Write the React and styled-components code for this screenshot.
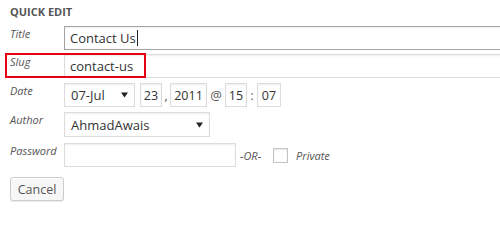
import React from 'react';
import styled, { createGlobalStyle } from 'styled-components';

const GlobalStyle = createGlobalStyle`
  html, body {
    margin: 0;
    padding: 0;
    background: #fff;
    overflow: hidden;
  }
  body {
    font-family: 'Open Sans', 'Liberation Sans', sans-serif;
    color: #333;
  }
`;

const Panel = styled.div`
  width: 500px;
  height: 205px;
  overflow: hidden;
  display: flex;
  flex-direction: column;
`;

const Heading = styled.h4`
  margin: 0;
  padding-left: 10px;
  font-size: 11px;
  font-weight: 700;
  line-height: 24px;
  color: #555;
  text-transform: uppercase;
  margin-bottom: 2px;
`;

const Row = styled.div`
  position: relative;
  display: flex;
  align-items: center;
  padding-left: 10px;
  margin-top: ${(p) => p.$mt || 0}px;
`;

const Label = styled.span`
  align-self: flex-start;
  width: 54px;
  flex-shrink: 0;
  font-size: 11px;
  font-style: italic;
  line-height: 16px;
  color: #555;
`;

const TextInput = styled.div`
  box-sizing: border-box;
  height: 24px;
  width: ${(p) => (p.$width ? `${p.$width}px` : 'auto')};
  flex: ${(p) => (p.$width ? 'none' : '1')};
  margin-right: ${(p) => (p.$width ? 0 : -12)}px;
  padding: 0 5px;
  display: flex;
  align-items: center;
  justify-content: ${(p) => (p.$center ? 'center' : 'flex-start')};
  border: 1px solid ${(p) => (p.$focused ? '#a4a4a4' : '#ddd')};
  box-shadow: inset 0 1px 2px rgba(0, 0, 0, 0.07);
  background: #fff;
  font-size: ${(p) => p.$size || 13}px;
  color: #333;
  white-space: nowrap;
`;

const Caret = styled.span`
  display: inline-block;
  width: 1px;
  height: 16px;
  background: #222;
  margin-left: 1px;
`;

const SelectBox = styled.div`
  box-sizing: border-box;
  height: ${(p) => p.$height || 24}px;
  width: ${(p) => p.$width}px;
  padding: 0 6px;
  display: flex;
  align-items: center;
  justify-content: space-between;
  border: 1px solid #ddd;
  box-shadow: inset 0 1px 2px rgba(0, 0, 0, 0.07);
  background: #fff;
  font-size: 13px;
  color: #333;
`;

const Sep = styled.span`
  width: ${(p) => p.$width}px;
  text-align: center;
  font-size: ${(p) => p.$size || 12}px;
  color: #555;
`;

const Note = styled.span`
  font-size: 11px;
  font-style: italic;
  color: #555;
  margin-left: ${(p) => p.$ml || 0}px;
`;

const Checkbox = styled.span`
  box-sizing: border-box;
  width: 15px;
  height: 15px;
  margin-left: 12px;
  border: 1px solid #c4c4c4;
  background: #fff;
  box-shadow: inset 0 1px 2px rgba(0, 0, 0, 0.1);
`;

const Highlight = styled.div`
  position: absolute;
  left: 5px;
  top: -1px;
  width: 141px;
  height: 25px;
  box-sizing: border-box;
  border: 2px solid #e60012;
  pointer-events: none;
  z-index: 1;
`;

const Button = styled.button`
  margin: 10px 0 0 10px;
  align-self: flex-start;
  box-sizing: border-box;
  width: 54px;
  height: 24px;
  padding: 0;
  font-family: inherit;
  font-size: 12.5px;
  color: #555;
  background: #f7f7f7;
  border: 1px solid #ccc;
  border-radius: 3px;
  box-shadow: inset 0 1px 0 #fff, 0 1px 0 rgba(0, 0, 0, 0.08);
`;

function Arrow() {
  return (
    <svg width="7" height="6" viewBox="0 0 7 6">
      <path d="M0 0.5h7L3.5 5.5z" fill="#222" />
    </svg>
  );
}

export default function App() {
  return (
    <>
      <GlobalStyle />
      <Panel>
        <Heading>Quick Edit</Heading>

        <Row>
          <Label>Title</Label>
          <TextInput $focused>
            Contact Us
            <Caret />
          </TextInput>
        </Row>

        <Row $mt={4}>
          <Label>Slug</Label>
          <TextInput>contact-us</TextInput>
          <Highlight />
        </Row>

        <Row $mt={5}>
          <Label>Date</Label>
          <SelectBox $width={71}>
            07-Jul
            <Arrow />
          </SelectBox>
          <Sep $width={5} />
          <TextInput $width={22} $center $size={12.5}>
            23
          </TextInput>
          <Sep $width={8}>,</Sep>
          <TextInput $width={37} $center $size={12.5}>
            2011
          </TextInput>
          <Sep $width={18} $size={13}>
            @
          </Sep>
          <TextInput $width={22} $center $size={12.5}>
            15
          </TextInput>
          <Sep $width={10}>:</Sep>
          <TextInput $width={24} $center $size={12.5}>
            07
          </TextInput>
        </Row>

        <Row $mt={5}>
          <Label>Author</Label>
          <SelectBox $width={146} $height={25}>
            AhmadAwais
            <Arrow />
          </SelectBox>
        </Row>

        <Row $mt={6}>
          <Label>Password</Label>
          <TextInput $width={172} />
          <Note $ml={4}>-OR-</Note>
          <Checkbox />
          <Note $ml={8}>Private</Note>
        </Row>

        <Button>Cancel</Button>
      </Panel>
    </>
  );
}
